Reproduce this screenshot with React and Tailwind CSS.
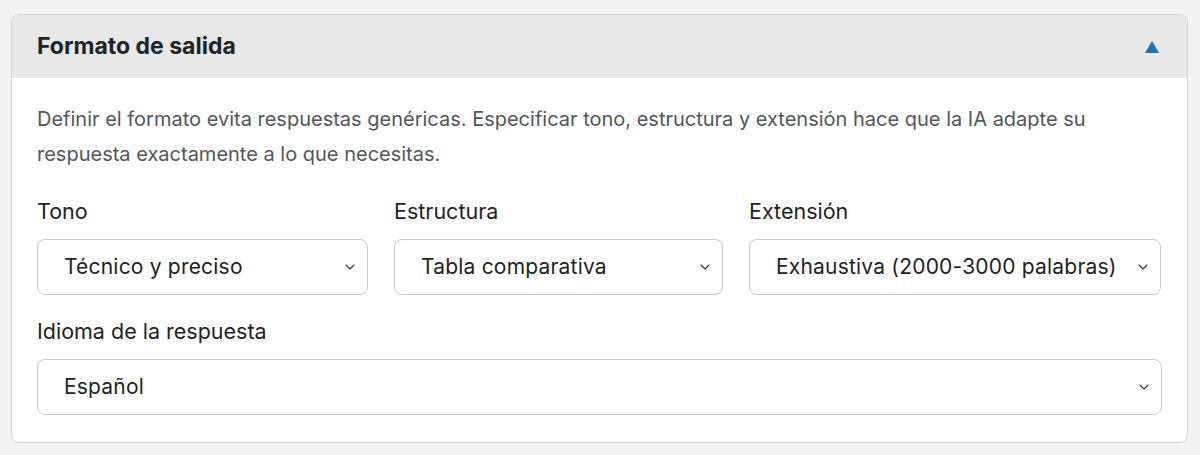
import { ChevronDown } from 'lucide-react';

const fields = [
  { label: 'Tono', value: 'Técnico y preciso' },
  { label: 'Estructura', value: 'Tabla comparativa' },
  { label: 'Extensión', value: 'Exhaustiva (2000-3000 palabras)' },
];

function SelectBox({ value }) {
  return (
    <div className="flex items-center justify-between h-[56px] pl-[26px] pr-[9px] bg-white border border-[#c9cacc] rounded-[8px]">
      <span className="text-[21px] tracking-[0.2px] text-[#1d2327] whitespace-nowrap">{value}</span>
      <ChevronDown className="h-[16px] w-[16px] text-[#2c3338]" strokeWidth={1.6} />
    </div>
  );
}

export default function App() {
  return (
    <div
      className="min-h-[455px] bg-[#f3f3f3] pt-[14px] pl-[11px] pr-[12px]"
      style={{ fontFamily: 'Inter, "Noto Sans", sans-serif' }}
    >
      <div className="w-[1177px] bg-white border border-[#d4d4d6] rounded-[8px] overflow-hidden">
        {/* Header */}
        <div className="flex items-center justify-between h-[63px] px-[25px] bg-[#e8e8e8]">
          <h2 className="text-[23px] font-bold text-[#1d2327]">Formato de salida</h2>
          <svg width="14" height="12" viewBox="0 0 14 12" className="mr-[3px]">
            <polygon points="7,0 14,12 0,12" fill="#2271b1" />
          </svg>
        </div>

        {/* Body */}
        <div className="px-[25px] pt-[24px] pb-[27px]">
          <p className="text-[20px] leading-[35px] text-[#50575e]">
            Definir el formato evita respuestas genéricas. Especificar tono, estructura y extensión hace que la IA adapte su respuesta exactamente a lo que necesitas.
          </p>

          <div className="grid grid-cols-[331px_329px_412px] gap-x-[26px] mt-[26px]">
            {fields.map((f) => (
              <div key={f.label}>
                <label className="block text-[21.5px] leading-[26px] text-[#1d2327] mb-[15px]">{f.label}</label>
                <SelectBox value={f.value} />
              </div>
            ))}
          </div>

          <div className="mt-[23px]">
            <label className="block text-[21.5px] leading-[26px] text-[#1d2327] mb-[15px]">Idioma de la respuesta</label>
            <SelectBox value="Español" />
          </div>
        </div>
      </div>
    </div>
  );
}
